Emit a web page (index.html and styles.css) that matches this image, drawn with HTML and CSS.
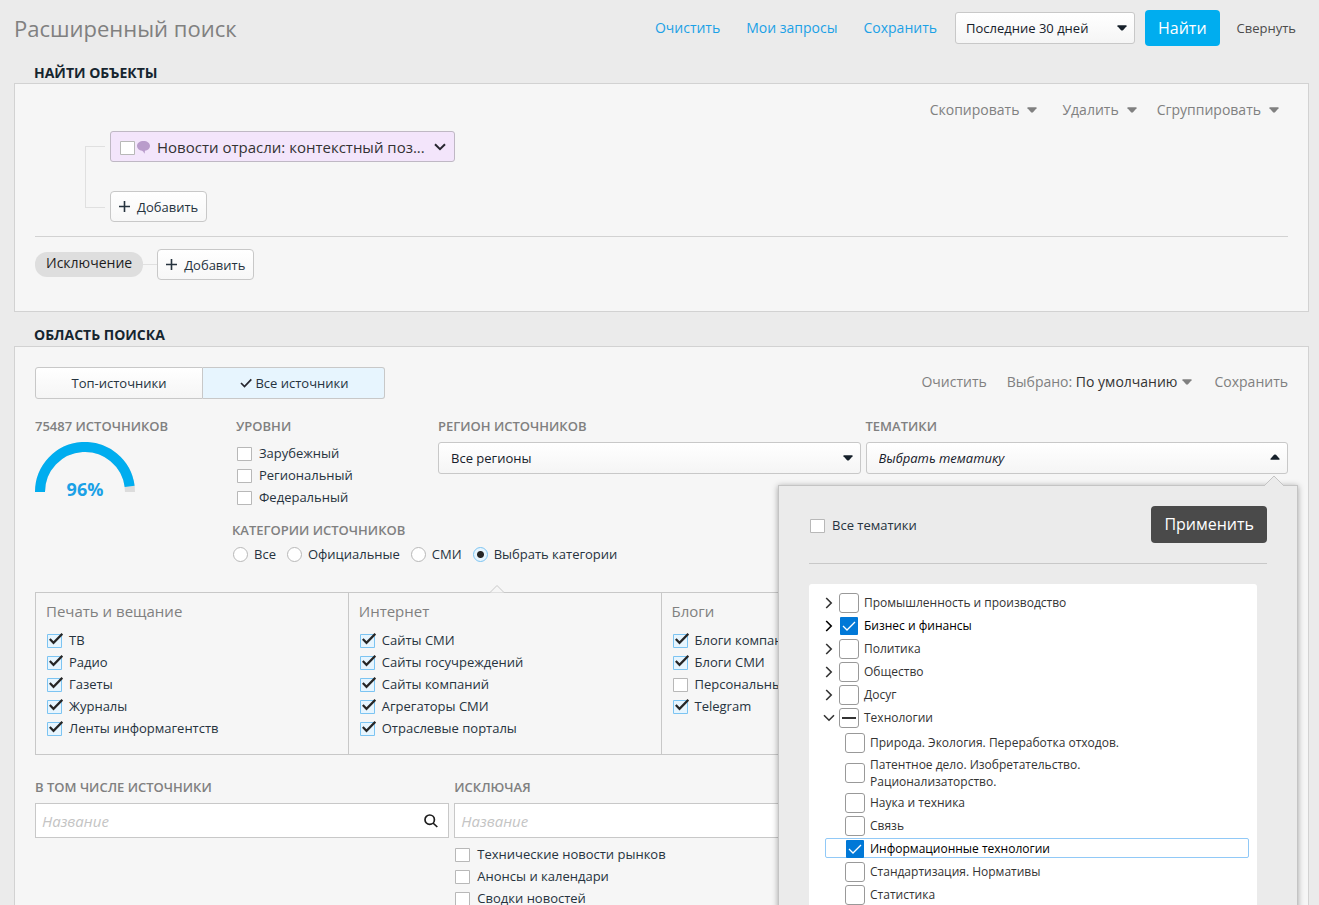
FILE: index.html
```html
<!DOCTYPE html>
<html lang="ru">
<head>
<meta charset="utf-8">
<title>Расширенный поиск</title>
<link rel="stylesheet" href="styles.css">
</head>
<body>
<svg class="sprite" aria-hidden="true">
  <symbol id="caret" viewBox="0 0 10 6"><path d="M0.500 0.300h9L9.500 1.200 6 5.200q-1 .9-2 0L0.500 1.200z"/></symbol>
  <symbol id="plus" viewBox="0 0 11 11"><path d="M4.700 0h1.600v4.700H11v1.600H6.300V11H4.700V6.300H0V4.700h4.700z"/></symbol>
  <symbol id="right" viewBox="0 0 8 12"><path d="M1.200 1l5 5-5 5" fill="none" stroke="currentColor" stroke-width="1.600"/></symbol>
  <symbol id="down" viewBox="0 0 12 8"><path d="M1 1.200l5 5 5-5" fill="none" stroke="currentColor" stroke-width="1.600"/></symbol>
</svg>
<div class="page">
  <header class="header">
    <h1 class="header__title">Расширенный поиск</h1>
    <nav class="header__links">
      <a href="#clear">Очистить</a>
      <a href="#queries">Мои запросы</a>
      <a href="#save">Сохранить</a>
    </nav>
    <select class="select select--period" aria-label="Период"><option>Последние 30 дней</option></select>
    <button class="find" type="button">Найти</button>
    <button class="plain plain--dark" type="button">Свернуть</button>
  </header>

  <h2 class="section-title">Найти объекты</h2>
  <section class="panel panel--objects">
    <div class="toolbar">
      <button class="plain plain--spaced" type="button">Скопировать <svg class="caret"><use href="#caret"/></svg></button>
      <button class="plain" type="button">Удалить <svg class="caret"><use href="#caret"/></svg></button>
      <button class="plain" type="button">Сгруппировать <svg class="caret"><use href="#caret"/></svg></button>
    </div>
    <div class="tree">
      <div class="tree__bracket"></div>
      <div class="tree__items">
        <div class="object">
          <input class="check" type="checkbox" id="news">
          <svg class="object__bubble" viewBox="0 0 13 14"><path d="M6.500 1C2.900 1 0 3 0 6c0 2.600 2.300 4.300 5 4.700 1.300.4 1.600 1.500 2.500 3 .4-1.100.3-2.100.4-3C10.700 10.300 13 8.600 13 6 13 3 10.100 1 6.500 1z"/></svg>
          <label class="object__name" for="news">Новости отрасли: контекстный поз...</label>
          <button class="object__toggle" type="button" aria-label="Развернуть"><svg viewBox="0 0 12 8"><path d="M1 1.200l5 5 5-5"/></svg></button>
        </div>
        <button class="add" type="button"><svg class="plus"><use href="#plus"/></svg>Добавить</button>
      </div>
    </div>
    <div class="exclude">
      <span class="exclude__pill">Исключение</span>
      <span class="exclude__line"></span>
      <button class="add" type="button"><svg class="plus"><use href="#plus"/></svg>Добавить</button>
    </div>
  </section>

  <h2 class="section-title section-title--area">Область поиска</h2>
  <section class="panel panel--area">
    <div class="area-head">
      <div class="switch">
        <button class="switch__item" type="button">Топ-источники</button>
        <button class="switch__item switch__item--on" type="button"><svg class="tick" viewBox="0 0 12 10"><path d="M1 5l3.500 3.500L11.300 1.300"/></svg>Все источники</button>
      </div>
      <div class="area-head__actions">
        <button class="plain" type="button">Очистить</button>
        <button class="plain plain--chosen" type="button"><span>Выбрано: <b>По умолчанию</b></span><svg class="caret"><use href="#caret"/></svg></button>
        <button class="plain plain--last" type="button">Сохранить</button>
      </div>
    </div>

    <div class="filters">
      <div class="filters__gauge">
        <h3 class="label">75487 источников</h3>
        <div class="gauge">
          <svg viewBox="0 0 100 50"><path class="gauge__rest" d="M5 50a45 45 0 0 1 90 0"/><path class="gauge__value" d="M5 50A45 45 0 0 1 94.650 44.360"/></svg>
          <span class="gauge__text">96%</span>
        </div>
      </div>
      <div class="filters__levels">
        <h3 class="label">Уровни</h3>
        <div class="checks">
          <label class="option"><input class="check" type="checkbox">Зарубежный</label>
          <label class="option"><input class="check" type="checkbox">Региональный</label>
          <label class="option"><input class="check" type="checkbox">Федеральный</label>
        </div>
      </div>
      <div class="filters__region">
        <label class="label" for="region">Регион источников</label>
        <select class="select" id="region"><option>Все регионы</option></select>
      </div>
      <div class="filters__theme">
        <label class="label" for="theme">Тематики</label>
        <select class="select select--open" id="theme"><option>Выбрать тематику</option></select>

        <div class="popup">
          <svg class="popup__arrow" viewBox="0 0 20 11"><path d="M0 11L10 1l10 10"/></svg>
          <div class="popup__head">
            <label class="option"><input class="check" type="checkbox">Все тематики</label>
            <button class="apply" type="button">Применить</button>
          </div>
          <div class="topics">
            <div class="topic"><svg class="topic__arrow"><use href="#right"/></svg><input class="box" type="checkbox" id="t1"><label for="t1">Промышленность и производство</label></div>
            <div class="topic topic--on"><svg class="topic__arrow"><use href="#right"/></svg><input class="box" type="checkbox" id="t2" checked><label for="t2">Бизнес и финансы</label></div>
            <div class="topic"><svg class="topic__arrow"><use href="#right"/></svg><input class="box" type="checkbox" id="t3"><label for="t3">Политика</label></div>
            <div class="topic"><svg class="topic__arrow"><use href="#right"/></svg><input class="box" type="checkbox" id="t4"><label for="t4">Общество</label></div>
            <div class="topic"><svg class="topic__arrow"><use href="#right"/></svg><input class="box" type="checkbox" id="t5"><label for="t5">Досуг</label></div>
            <div class="topic"><svg class="topic__arrow topic__arrow--down"><use href="#down"/></svg><input class="box box--mixed" type="checkbox" id="t6"><label for="t6">Технологии</label></div>
            <div class="topics__sub">
              <div class="topic"><input class="box" type="checkbox" id="s1"><label for="s1">Природа. Экология. Переработка отходов.</label></div>
              <div class="topic topic--tall"><input class="box" type="checkbox" id="s2"><label for="s2">Патентное дело. Изобретательство. Рационализаторство.</label></div>
              <div class="topic"><input class="box" type="checkbox" id="s3"><label for="s3">Наука и техника</label></div>
              <div class="topic"><input class="box" type="checkbox" id="s4"><label for="s4">Связь</label></div>
              <div class="topic topic--on topic--focus"><input class="box" type="checkbox" id="s5" checked><label for="s5">Информационные технологии</label></div>
              <div class="topic"><input class="box" type="checkbox" id="s6"><label for="s6">Стандартизация. Нормативы</label></div>
              <div class="topic"><input class="box" type="checkbox" id="s7"><label for="s7">Статистика</label></div>
            </div>
          </div>
        </div>
      </div>
    </div>

    <fieldset class="kinds">
      <legend class="label">Категории источников</legend>
      <div class="kinds__row">
        <label class="option"><input class="radio" type="radio" name="kind">Все</label>
        <label class="option"><input class="radio" type="radio" name="kind">Официальные</label>
        <label class="option"><input class="radio" type="radio" name="kind">СМИ</label>
        <label class="option"><input class="radio" type="radio" name="kind" checked>Выбрать категории</label>
      </div>
    </fieldset>

    <div class="categories">
      <svg class="categories__arrow" viewBox="0 0 14 8"><path d="M0 7.500l7-7 7 7"/></svg>
      <div class="category">
        <h4 class="category__title">Печать и вещание</h4>
        <label class="option"><input class="check" type="checkbox" checked>ТВ</label>
        <label class="option"><input class="check" type="checkbox" checked>Радио</label>
        <label class="option"><input class="check" type="checkbox" checked>Газеты</label>
        <label class="option"><input class="check" type="checkbox" checked>Журналы</label>
        <label class="option"><input class="check" type="checkbox" checked>Ленты информагентств</label>
      </div>
      <div class="category">
        <h4 class="category__title">Интернет</h4>
        <label class="option"><input class="check" type="checkbox" checked>Сайты СМИ</label>
        <label class="option"><input class="check" type="checkbox" checked>Сайты госучреждений</label>
        <label class="option"><input class="check" type="checkbox" checked>Сайты компаний</label>
        <label class="option"><input class="check" type="checkbox" checked>Агрегаторы СМИ</label>
        <label class="option"><input class="check" type="checkbox" checked>Отраслевые порталы</label>
      </div>
      <div class="category">
        <h4 class="category__title">Блоги</h4>
        <label class="option"><input class="check" type="checkbox" checked>Блоги компаний</label>
        <label class="option"><input class="check" type="checkbox" checked>Блоги СМИ</label>
        <label class="option"><input class="check" type="checkbox">Персональные</label>
        <label class="option"><input class="check" type="checkbox" checked>Telegram</label>
      </div>
      <div class="category"></div>
    </div>

    <div class="sources">
      <div>
        <label class="label" for="include">В том числе источники</label>
        <div class="search">
          <input class="search__input" id="include" type="text" placeholder="Название">
          <svg class="search__icon" viewBox="0 0 14 14"><circle cx="5.700" cy="5.700" r="4.700"/><path d="M9 9l4.300 4"/></svg>
        </div>
      </div>
      <div>
        <label class="label" for="except">Исключая</label>
        <div class="search"><input class="search__input" id="except" type="text" placeholder="Название"></div>
        <div class="checks">
          <label class="option"><input class="check" type="checkbox">Технические новости рынков</label>
          <label class="option"><input class="check" type="checkbox">Анонсы и календари</label>
          <label class="option"><input class="check" type="checkbox">Сводки новостей</label>
        </div>
      </div>
    </div>
  </section>
</div>
</body>
</html>
```

FILE: styles.css
```css
* { box-sizing: border-box; }

body {
  margin: 0;
  background: #ebebeb;
  color: #26333e;
  font: 13px/22px "Open Sans", "Noto Sans", sans-serif;
}

button, select, input { font: inherit; color: inherit; margin: 0; }
button { cursor: pointer; }
h1, h2, h3, h4 { margin: 0; }
svg { display: block; flex: none; }
.sprite { position: absolute; width: 0; height: 0; }

.page {
  height: 100vh;
  overflow: hidden;
  padding: 0 10px 0 14px;
}

/* Header */
.header {
  display: flex;
  align-items: center;
  height: 56px;
  padding-right: 13px;
}
.header__title {
  flex: 1;
  color: #808080;
  font-size: 22px;
  font-weight: 400;
  line-height: 30px;
}
.header__links {
  display: flex;
  gap: 26px;
  margin-right: 18px;
  font-size: 14px;
}
.header__links a { color: #1ba1e6; text-decoration: none; }

.select {
  appearance: none;
  display: block;
  width: 100%;
  height: 32px;
  padding: 0 30px 0 12px;
  border: 1px solid #c8c8c8;
  border-radius: 3px;
  color: #16202a;
  background:
    url("data:image/svg+xml,%3Csvg xmlns='http://www.w3.org/2000/svg' width='10' height='6'%3E%3Cpath d='M.5.300h9v.9L6 5.200q-1 .8-2 0L.5 1.200z' fill='%2316202a'/%3E%3C/svg%3E") no-repeat right 7px center,
    linear-gradient(#fff, #f5f5f5);
}
.select--period {
  width: 180px;
  padding-left: 10px;
  margin-right: 10px;
}
.select--open {
  font-style: italic;
  background:
    url("data:image/svg+xml,%3Csvg xmlns='http://www.w3.org/2000/svg' width='10' height='8'%3E%3Cpath d='M.5 5.700h9v-.9L6 .8q-1-.8-2 0L.5 4.800z' fill='%2316202a'/%3E%3C/svg%3E") no-repeat right 7px center,
    linear-gradient(#fff, #f5f5f5);
}

.find {
  height: 36px;
  margin-right: 17px;
  padding: 0 13px;
  border: 0;
  border-radius: 4px;
  background: #00adef;
  color: #fff;
  font-size: 16px;
}

.plain {
  display: flex;
  align-items: center;
  gap: 8px;
  padding: 0;
  border: 0;
  background: none;
  color: #808080;
  font-size: 14px;
  line-height: 20px;
}
.plain--dark { color: #4c4c4c; font-size: 13px; }
.plain--spaced { margin-right: 5px; }
.plain--chosen { gap: 5px; }
.plain--last { margin-left: 2px; }
.plain b { color: #333; font-weight: 400; }
.caret { width: 10px; height: 6px; fill: #808080; }

/* Sections */
.section-title {
  margin-top: 7px;
  padding-left: 20px;
  color: #16252f;
  font-size: 14px;
  font-weight: 700;
  line-height: 20px;
  text-transform: uppercase;
}
.section-title--area { margin-top: 13px; padding-bottom: 1px; }
.panel {
  border: 1px solid #d2d2d2;
  background: #f6f6f6;
}
.panel--objects { padding: 16px 20px 31px; }
.panel--area { padding: 20px 20px 60px; }

.toolbar {
  display: flex;
  justify-content: flex-end;
  gap: 20px;
  padding-right: 9px;
}

.tree {
  display: flex;
  gap: 5px;
  margin-top: 11px;
  padding: 0 0 14px 50px;
  border-bottom: 1px solid #d2d2d2;
}
.tree__bracket {
  width: 20px;
  margin: 15px 0 14px;
  border: 1px solid #e0e0e0;
  border-right: 0;
}
.tree__items {
  display: flex;
  flex-direction: column;
  align-items: flex-start;
  gap: 29px;
}
.object {
  display: flex;
  align-items: center;
  width: 345px;
  height: 31px;
  padding: 0 8px;
  border: 1px solid #bfb8c4;
  border-radius: 3px;
  background: #f3e5fb;
}
.object__bubble { width: 13px; height: 14px; margin-left: 1px; fill: #b99ccb; }
.object__name {
  flex: 1;
  margin-left: 7px;
  color: #333;
  font-size: 15px;
  white-space: nowrap;
}
.object__toggle { padding: 0; border: 0; background: none; }
.object__toggle svg { width: 12px; height: 8px; fill: none; stroke: #26262e; stroke-width: 2; }

.add {
  display: flex;
  align-items: center;
  gap: 7px;
  height: 31px;
  padding: 0 8px;
  border: 1px solid #c8c8c8;
  border-radius: 4px;
  background: linear-gradient(#fff, #f7f7f7);
}
.plus { width: 11px; height: 11px; fill: #26333e; }

.exclude { display: flex; align-items: center; margin-top: 12px; }
.exclude__pill {
  height: 25px;
  padding: 0 11px;
  border-radius: 12px;
  background: #dedede;
  color: #1c1c1c;
  font-size: 14px;
}
.exclude__line { width: 14px; height: 1px; background: #e0e0e0; }

/* Search area */
.area-head { display: flex; justify-content: space-between; }
.area-head__actions { display: flex; gap: 20px; height: 30px; }
.switch { display: flex; }
.switch__item {
  display: flex;
  align-items: center;
  justify-content: center;
  gap: 3px;
  width: 168px;
  height: 32px;
  border: 1px solid #c8c8c8;
  border-radius: 3px 0 0 3px;
  background: linear-gradient(#fff, #f5f5f5);
}
.switch__item--on {
  width: 182px;
  padding-left: 8px;
  border-left: 0;
  border-radius: 0 3px 3px 0;
  background: #e7f5fe;
}
.tick { width: 12px; height: 10px; fill: none; stroke: #26262e; stroke-width: 1.700; }

.label {
  display: block;
  padding: 0;
  color: #808080;
  font-size: 13px;
  font-weight: 600;
  line-height: 20px;
  text-transform: uppercase;
}

.filters {
  display: grid;
  grid-template-columns: 196px 197px 1fr 1fr;
  column-gap: 5px;
  margin-top: 17px;
}
.filters .label { margin-bottom: 6px; }
.filters__theme { position: relative; }

.gauge { position: relative; width: 100px; }
.gauge path { fill: none; stroke-width: 10; }
.gauge .gauge__rest { stroke: #dcdcdc; }
.gauge .gauge__value { stroke: #00adef; }
.gauge__text {
  position: absolute;
  inset: auto 0 -8px;
  color: #1ba1e6;
  font-size: 18px;
  font-weight: 700;
  text-align: center;
}

.checks { display: flex; flex-direction: column; align-items: flex-start; }
.option { display: flex; align-items: center; gap: 6px; }

.check {
  appearance: none;
  flex: none;
  width: 17px;
  height: 18px;
  background: url("data:image/svg+xml,%3Csvg xmlns='http://www.w3.org/2000/svg' width='17' height='18'%3E%3Cpath d='M1.500 3.500h14v13h-14z' fill='%23fff' stroke='%23b8b8b8'/%3E%3C/svg%3E") no-repeat;
}
.check:checked {
  background-image: url("data:image/svg+xml,%3Csvg xmlns='http://www.w3.org/2000/svg' width='17' height='18'%3E%3Cpath d='M1.500 3.500h14v13h-14z' fill='%23e7f5fe' stroke='%237cc4f2'/%3E%3Cpath d='M3.800 8l3.700 3.800L16.300 2.800' fill='none' stroke='%23262626' stroke-width='2.200'/%3E%3C/svg%3E");
}

.radio {
  appearance: none;
  flex: none;
  width: 15px;
  height: 15px;
  border: 1px solid #b8b8b8;
  border-radius: 50%;
  background: #fff;
}
.radio:checked {
  border-color: #7cc4f2;
  background: radial-gradient(circle, #262626 3px, #e7f5fe 4px);
}

.kinds {
  margin: 12px 0 0 197px;
  padding: 0;
  border: 0;
}
.kinds__row { display: flex; gap: 11px; margin-top: 3px; padding-left: 1px; }

.categories {
  position: relative;
  display: grid;
  grid-template-columns: repeat(4, 1fr);
  min-height: 163px;
  margin-top: 27px;
  border: 1px solid #c8c8c8;
}
.categories__arrow {
  position: absolute;
  top: -8px;
  left: 454px;
  width: 14px;
  height: 8px;
  fill: #f6f6f6;
  stroke: #c8c8c8;
}
.category { padding: 8px 10px 14px; border-right: 1px solid #c8c8c8; }
.category:last-child { border-right: 0; }
.category__title {
  margin-bottom: 8px;
  color: #808080;
  font-size: 15px;
  font-weight: 400;
  line-height: 20px;
}

.sources {
  display: grid;
  grid-template-columns: repeat(3, 1fr);
  gap: 5px;
  margin-top: 22px;
}
.search {
  display: flex;
  align-items: center;
  height: 35px;
  margin: 6px 0 5px;
  padding: 0 10px 0 6px;
  border: 1px solid #c8c8c8;
  background: #fff;
}
.search__input {
  flex: 1;
  min-width: 0;
  padding: 0;
  border: 0;
  outline: 0;
  background: none;
  font-size: 15px;
}
.search__input::placeholder { color: #c4c4c4; font-style: italic; opacity: 1; }
.search__icon { width: 14px; height: 14px; fill: none; stroke: #1c1c1c; stroke-width: 1.700; }

/* Topic picker */
.popup {
  position: absolute;
  z-index: 10;
  top: 69px;
  right: -10px;
  width: 520px;
  height: 520px;
  padding: 20px 30px;
  border: 1px solid #c4c4c4;
  background: #ebebeb;
  box-shadow: 0 1px 6px rgba(0, 0, 0, 0.350);
}
.popup__arrow {
  position: absolute;
  top: -11px;
  right: 13px;
  width: 20px;
  height: 11px;
  fill: #ebebeb;
  stroke: #c4c4c4;
}
.popup__head {
  display: flex;
  align-items: center;
  justify-content: space-between;
  padding-bottom: 20px;
  border-bottom: 1px solid #c8c8c8;
}
.apply {
  height: 37px;
  padding: 0 13px 2px;
  border: 0;
  border-radius: 4px;
  background: #4a4a4a;
  color: #fff;
  font-size: 16px;
}

.topics {
  height: 400px;
  margin: 20px 10px 0 0;
  padding: 7px 8px 0 16px;
  border-radius: 3px;
  background: #fff;
  color: #333;
  font-size: 12px;
  line-height: 17px;
}
.topic { display: flex; align-items: center; height: 23px; }
.topic--tall { height: 37px; }
.topic--on { color: #000; }
.topic label { max-width: 260px; }
.topic__arrow { width: 8px; height: 12px; margin-right: 6px; }
.topic__arrow--down { width: 12px; height: 8px; margin: 0 4px 0 -2px; }
.topics__sub { padding-top: 2px; }
.topics__sub .topic { padding-left: 20px; }
.topics__sub .topic--focus { position: relative; }
.topics__sub .topic--focus::before {
  content: "";
  position: absolute;
  inset: 1px 0 2px;
  border: 1px solid #91c9f7;
  border-radius: 2px;
}

.box {
  appearance: none;
  position: relative;
  flex: none;
  width: 20px;
  height: 20px;
  margin-right: 5px;
  border: 1px solid #999;
  border-radius: 3px;
  background: #fff center no-repeat;
}
.box:checked {
  width: 18px;
  height: 18px;
  margin: 0 6px 0 1px;
  border: 0;
  border-radius: 1px;
  background-color: #0078d7;
  background-image: url("data:image/svg+xml,%3Csvg xmlns='http://www.w3.org/2000/svg' width='14' height='10'%3E%3Cpath d='M1 5l4 4L13 1' fill='none' stroke='%23fff' stroke-width='1.300'/%3E%3C/svg%3E");
}
.box--mixed { background-image: linear-gradient(#333, #333); background-size: 14px 2px; }
```
